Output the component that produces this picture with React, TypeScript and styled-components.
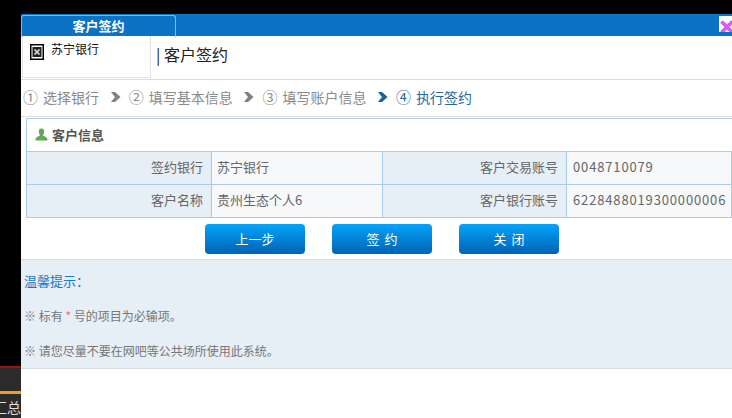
import React from 'react'
import styled, { createGlobalStyle } from 'styled-components'

const FONT = `"Noto Sans CJK SC", "Liberation Sans", sans-serif`

const GlobalStyle = createGlobalStyle`
  html, body {
    margin: 0;
    padding: 0;
    width: 732px;
    height: 418px;
    overflow: hidden;
    background: #000;
    font-family: ${FONT};
  }
`

const Page = styled.div`
  display: flex;
  width: 732px;
  height: 418px;
  overflow: hidden;
`

const Backdrop = styled.div`
  width: 21px;
  flex: none;
  display: flex;
  flex-direction: column;
  justify-content: flex-end;
  color: #ddd;
  font-size: 14px;
`

const BackdropBar = styled.div`
  height: 23px;
  background: #2b2b2b;
  border-top: 2px solid #a01212;
`

const BackdropTab = styled.div`
  height: 24px;
  line-height: 26px;
  background: #2b2b2b;
  border-top: 3px solid #f09a2f;
  white-space: nowrap;
  overflow: hidden;
  text-indent: -7px;
`

const Dialog = styled.div`
  flex: 1;
  min-width: 0;
  margin-top: 14px;
  background: #fff;
  display: flex;
  flex-direction: column;
`

const TitleBar = styled.div`
  height: 22px;
  flex: none;
  background: #0b72c4;
  display: flex;
  justify-content: space-between;
  align-items: flex-start;
`

const TitleTab = styled.div`
  width: 153px;
  height: 21px;
  margin-top: 1px;
  border: 1px solid #8fb6dc;
  border-bottom: none;
  border-radius: 3px 3px 0 0;
  color: #fff;
  font-size: 13px;
  font-weight: bold;
  line-height: 20px;
  text-align: center;
`

const CloseBox = styled.div`
  width: 13px;
  height: 16px;
  margin-top: 2px;
  background: #fff;
  overflow: hidden;
`

const BankHeader = styled.div`
  height: 43px;
  flex: none;
  display: flex;
  align-items: center;
  border-bottom: 1px solid #dcdcdc;
`

const BankLogo = styled.div`
  width: 129px;
  height: 42px;
  margin-left: 1px;
  align-self: flex-start;
  border: 1px solid #e2e2e2;
  border-top: none;
  padding: 4px 0 0 7px;
  box-sizing: border-box;
  display: flex;
  gap: 7px;
  font-size: 12px;
  color: #111;
  line-height: 18px;
`

const LogoIcon = styled.svg`
  margin-top: 4px;
  flex: none;
`

const HeaderTitle = styled.div`
  margin-left: 5px;
  margin-top: -7px;
  font-size: 16px;
  color: #222;
`

const Steps = styled.div`
  height: 37px;
  flex: none;
  display: flex;
  align-items: center;
  border-bottom: 1px solid #dcdcdc;
  padding: 0 0 2px 2px;
  box-sizing: border-box;
`

const Step = styled.div<{ $active?: boolean }>`
  display: flex;
  align-items: center;
  gap: 5px;
  font-size: 14px;
  color: ${p => (p.$active ? '#1e6a9e' : '#8a8a8a')};
`

const StepNumber = styled.span`
  font-size: 15px;
  line-height: 20px;
`

const StepArrow = styled.svg`
  width: 11px;
  height: 10px;
  margin: 0 8px 0 10.7px;
  flex: none;
`

const Panel = styled.div`
  margin: 1px 0 0 5px;
  flex: none;
`

const InfoTable = styled.div`
  border: 1px solid #a9ccee;
  border-right: none;
`

const InfoHead = styled.div`
  height: 32px;
  box-sizing: border-box;
  display: flex;
  align-items: center;
  gap: 4px;
  padding: 0 0 2px 8px;
  font-size: 13px;
  font-weight: bold;
  color: #555;
`

const InfoRow = styled.div`
  height: 33px;
  display: grid;
  grid-template-columns: 185px 171px 184px 1fr;
  border-top: 1px solid #a9ccee;
  box-sizing: border-box;
`

const LabelCell = styled.div`
  background: #e6eef6;
  color: #666;
  font-size: 13px;
  line-height: 30px;
  text-align: right;
  padding-right: 8px;
  border-right: 1px solid #a9ccee;
`

const ValueCell = styled.div<{ $digits?: boolean }>`
  background: #f6f8fa;
  color: #666;
  font-size: 13px;
  line-height: 30px;
  padding-left: ${p => (p.$digits ? '6px' : '5px')};
  border-right: 1px solid #a9ccee;
  white-space: nowrap;
  overflow: hidden;
  letter-spacing: ${p => (p.$digits ? '0.85px' : '0')};
`

const Buttons = styled.div`
  height: 41px;
  flex: none;
  box-sizing: border-box;
  display: flex;
  align-items: flex-start;
  gap: 27px;
  padding: 6px 0 0 184px;
`

const ActionButton = styled.div`
  width: 100px;
  height: 30px;
  border-radius: 4px;
  background: linear-gradient(#05a3fb, #0162b4);
  color: #fff;
  font-size: 13px;
  line-height: 29px;
  text-align: center;
  white-space: pre;
  word-spacing: 2px;
`

const Notice = styled.div`
  height: 110px;
  flex: none;
  background: #e6eef6;
  border-top: 1px solid #dcdcdc;
  border-bottom: 1px solid #dcdcdc;
  padding: 12px 0 0 3px;
  box-sizing: border-box;
  font-size: 12px;
  color: #777;
`

const NoticeTitle = styled.div`
  font-size: 13px;
  color: #1778c8;
  line-height: 18px;
  margin-bottom: 17px;
`

const NoticeLine = styled.div`
  line-height: 18px;
  margin-bottom: 17px;
`

const Star = styled.span`
  color: #f66;
`

const Blank = styled.div`
  flex: 1;
  background: #fff;
`

const rows = [
  ['签约银行', '苏宁银行', '客户交易账号', '0048710079'],
  ['客户名称', '贵州生态个人6', '客户银行账号', '6228488019300000006'],
]

const stepList = ['选择银行', '填写基本信息', '填写账户信息', '执行签约']
const numbers = ['①', '②', '③', '④']

export default function App() {
  return (
    <Page>
      <GlobalStyle />
      <Backdrop>
        <BackdropBar />
        <BackdropTab>汇总</BackdropTab>
      </Backdrop>
      <Dialog>
        <TitleBar>
          <TitleTab>客户签约</TitleTab>
          <CloseBox>
            <svg width="16" height="16" viewBox="0 0 16 16">
              <path d="M2.5 2.5 L13.5 13.5 M13.5 2.5 L2.5 13.5" stroke="#d65cf0" strokeWidth="3.6" />
            </svg>
          </CloseBox>
        </TitleBar>
        <BankHeader>
          <BankLogo>
            <LogoIcon width="14" height="16" viewBox="0 0 14 16">
              <rect x="0.75" y="0.75" width="12.5" height="14.5" fill="#fff" stroke="#000" strokeWidth="1.5" />
              <rect x="2.5" y="3" width="9" height="10" fill="#222" />
              <path d="M4.5 5.5 L9.5 10.5 M9.5 5.5 L4.5 10.5" stroke="#ddd" strokeWidth="1.7" />
            </LogoIcon>
            苏宁银行
          </BankLogo>
          <HeaderTitle>| 客户签约</HeaderTitle>
        </BankHeader>
        <Steps>
          {stepList.map((s, i) => (
            <React.Fragment key={s}>
              {i > 0 && (
                <StepArrow viewBox="0 0 11 10">
                  <path d="M1 0 H5 L10.5 5 L5 10 H1 L5 5 Z" fill={i === 3 ? '#17649c' : '#808080'} />
                </StepArrow>
              )}
              <Step $active={i === 3}>
                <StepNumber>{numbers[i]}</StepNumber>
                {s}
              </Step>
            </React.Fragment>
          ))}
        </Steps>
        <Panel>
          <InfoTable>
            <InfoHead>
              <svg width="13" height="13" viewBox="0 0 13 13">
                <path d="M6.5 0.5 C8.6 0.5 9.4 2.2 9.2 4 C9 5.6 8.3 6.6 8 7.2 C8.3 8.4 12.5 8.6 12.5 11.5 V12.5 H0.5 V11.5 C0.5 8.6 4.7 8.4 5 7.2 C4.7 6.6 4 5.6 3.8 4 C3.6 2.2 4.4 0.5 6.5 0.5 Z" fill="#63a758" />
              </svg>
              客户信息
            </InfoHead>
            {rows.map(r => (
              <InfoRow key={r[0]}>
                <LabelCell>{r[0]}</LabelCell>
                <ValueCell>{r[1]}</ValueCell>
                <LabelCell>{r[2]}</LabelCell>
                <ValueCell $digits>{r[3]}</ValueCell>
              </InfoRow>
            ))}
          </InfoTable>
        </Panel>
        <Buttons>
          <ActionButton>上一步</ActionButton>
          <ActionButton>签 约</ActionButton>
          <ActionButton>关 闭</ActionButton>
        </Buttons>
        <Notice>
          <NoticeTitle>温馨提示：</NoticeTitle>
          <NoticeLine>※ 标有 <Star>*</Star> 号的项目为必输项。</NoticeLine>
          <NoticeLine>※ 请您尽量不要在网吧等公共场所使用此系统。</NoticeLine>
        </Notice>
        <Blank />
      </Dialog>
    </Page>
  )
}
